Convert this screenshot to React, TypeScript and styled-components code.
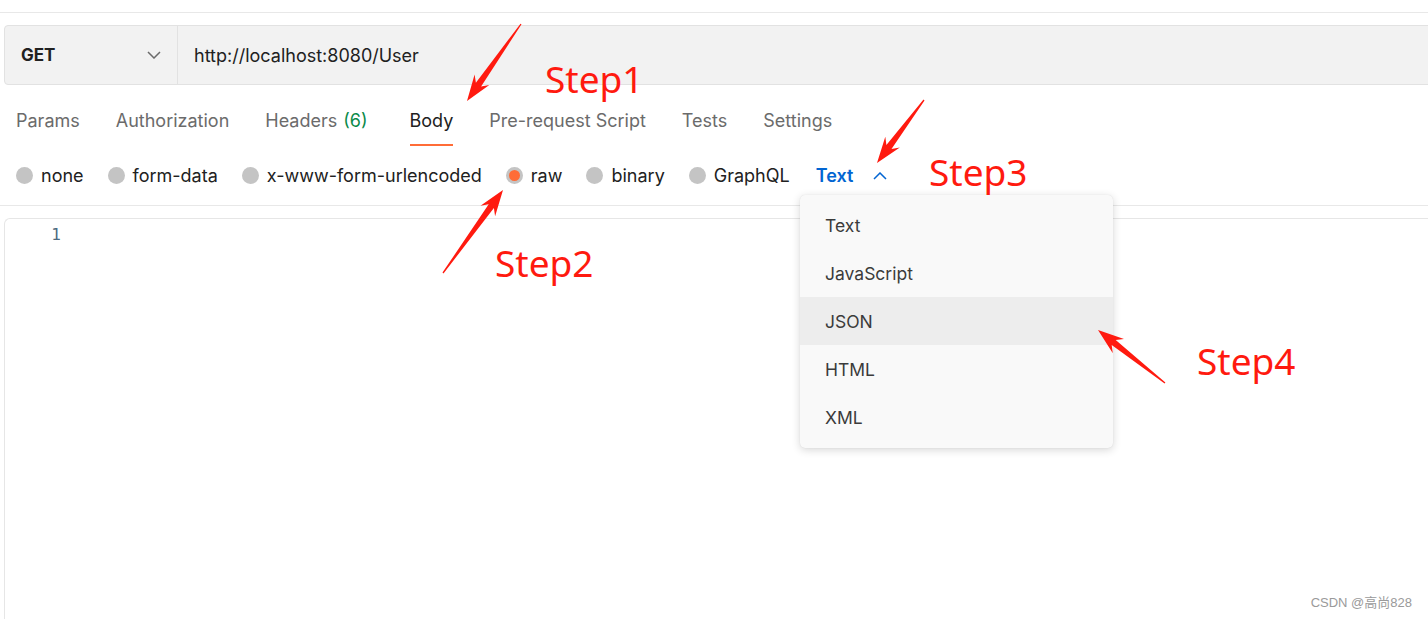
import React from "react";
import styled, { createGlobalStyle } from "styled-components";

const Global = createGlobalStyle`
  html, body { margin: 0; padding: 0; background: #ffffff; overflow: hidden; }
  body { font-family: Inter, "Noto Sans", sans-serif; width: 1428px; height: 619px; }
`;

const Page = styled.div`
  position: relative;
  width: 1428px;
  height: 619px;
  overflow: hidden;
  background: #fff;
`;

const TopRule = styled.div`
  height: 12px;
  border-bottom: 1px solid #e8e8e8;
`;

const RequestBar = styled.div`
  display: flex;
  align-items: stretch;
  margin: 12px 0 0 4px;
  width: 1460px;
  height: 60px;
  background: #f2f2f2;
  border: 1px solid #e2e2e2;
  border-radius: 4px;
  box-sizing: border-box;
`;

const Method = styled.div`
  display: flex;
  align-items: center;
  justify-content: space-between;
  width: 173px;
  box-sizing: border-box;
  padding: 0 16px 0 16px;
  border-right: 1px solid #e2e2e2;
  font-weight: 700;
  font-size: 17px;
  color: #212121;
`;

const Url = styled.div`
  display: flex;
  align-items: center;
  padding-left: 16px;
  font-size: 18px;
  color: #212121;
`;

const Tabs = styled.div`
  display: flex;
  gap: 36px;
  padding: 0 0 0 16px;
  height: 61px;
  align-items: stretch;
`;

const Tab = styled.div<{ $active?: boolean }>`
  display: flex;
  align-items: center;
  padding-top: 12px;
  box-sizing: border-box;
  font-size: 18px;
  color: ${(p) => (p.$active ? "#212121" : "#6b6b6b")};
  border-bottom: 2px solid ${(p) => (p.$active ? "#ff6c37" : "transparent")};
  height: 61px;
`;

const Count = styled.span`
  color: #0b8a4a;
  margin-left: 6px;
  margin-right: 6px;
`;

const BodyTypes = styled.div`
  display: flex;
  align-items: center;
  height: 59px;
  padding-left: 16px;
  border-bottom: 1px solid #e8e8e8;
  gap: 24px;
`;

const Option = styled.div`
  display: flex;
  align-items: center;
  gap: 8px;
  font-size: 18px;
  color: #212121;
`;

const Radio = styled.span<{ $checked?: boolean }>`
  width: 17px;
  height: 17px;
  border-radius: 50%;
  box-sizing: border-box;
  background: ${(p) => (p.$checked ? "#ff6c37" : "#c4c4c4")};
  border: ${(p) => (p.$checked ? "3px solid #c4c4c4" : "none")};
`;

const LangSelect = styled.div`
  display: flex;
  align-items: center;
  gap: 20px;
  margin-left: 2px;
  color: #0265d2;
  font-weight: 600;
  font-size: 18px;
`;

const Editor = styled.div`
  margin: 12px 0 0 4px;
  width: 1460px;
  height: 420px;
  border-top: 1px solid #e6e6e6;
  border-left: 1px solid #e6e6e6;
  border-top-left-radius: 6px;
`;

const LineNo = styled.div`
  width: 56px;
  text-align: right;
  padding-top: 6px;
  font-family: "DejaVu Sans Mono", monospace;
  font-size: 16px;
  color: #4d6a80;
`;

const Menu = styled.div`
  position: absolute;
  left: 800px;
  top: 195px;
  width: 313px;
  padding: 6px 0 7px;
  background: #f9f9f9;
  border-radius: 5px;
  box-shadow: 0 2px 8px rgba(0, 0, 0, 0.16), 0 0 1px rgba(0, 0, 0, 0.12);
`;

const MenuItem = styled.div<{ $hover?: boolean }>`
  height: 48px;
  display: flex;
  align-items: center;
  padding-left: 25px;
  font-size: 17.5px;
  color: #3b3b3b;
  background: ${(p) => (p.$hover ? "#ededed" : "transparent")};
`;

const StepLabel = styled.div<{ $x: number; $y: number }>`
  position: absolute;
  left: ${(p) => p.$x}px;
  top: ${(p) => p.$y}px;
  font-family: "Noto Sans", "Open Sans", sans-serif;
  font-size: 37px;
  line-height: 1;
  color: #ff1a0f;
`;

const Overlay = styled.svg`
  position: absolute;
  left: 0;
  top: 0;
  pointer-events: none;
`;

const Watermark = styled.div`
  position: absolute;
  right: 16px;
  bottom: 8px;
  font-family: "Liberation Sans", "Noto Sans CJK SC", sans-serif;
  font-size: 13px;
  color: #9a9a9a;
`;

function arrowPoints(tx: number, ty: number, px: number, py: number): string {
  const dx = px - tx;
  const dy = py - ty;
  const len = Math.hypot(dx, dy);
  const ux = dx / len;
  const uy = dy / len;
  const nx = -uy;
  const ny = ux;
  const headLen = 26;
  const hx = px - ux * headLen;
  const hy = py - uy * headLen;
  const jx = px - ux * (headLen - 6);
  const jy = py - uy * (headLen - 6);
  const pts: [number, number][] = [
    [tx + nx * 0.6, ty + ny * 0.6],
    [jx + nx * 3.2, jy + ny * 3.2],
    [hx + nx * 9, hy + ny * 9],
    [px, py],
    [hx - nx * 9, hy - ny * 9],
    [jx - nx * 3.2, jy - ny * 3.2],
    [tx - nx * 0.6, ty - ny * 0.6],
  ];
  return pts.map((p) => `${p[0].toFixed(1)},${p[1].toFixed(1)}`).join(" ");
}

const Chevron = ({ up, color }: { up?: boolean; color: string }) => (
  <svg width="14" height="8" viewBox="0 0 14 8">
    <path
      d={up ? "M1 7 L7 1 L13 7" : "M1 1 L7 7 L13 1"}
      fill="none"
      stroke={color}
      strokeWidth="1.5"
    />
  </svg>
);

const tabs = ["Params", "Authorization", "Headers", "Body", "Pre-request Script", "Tests", "Settings"];
const options = ["none", "form-data", "x-www-form-urlencoded", "raw", "binary", "GraphQL"];
const langs = ["Text", "JavaScript", "JSON", "HTML", "XML"];

export default function App() {
  return (
    <Page>
      <Global />
      <TopRule />
      <RequestBar>
        <Method>
          GET
          <Chevron color="#6b6b6b" />
        </Method>
        <Url>http://localhost:8080/User</Url>
      </RequestBar>
      <Tabs>
        {tabs.map((t) => (
          <Tab key={t} $active={t === "Body"}>
            {t}
            {t === "Headers" && <Count>(6)</Count>}
          </Tab>
        ))}
      </Tabs>
      <BodyTypes>
        {options.map((o) => (
          <Option key={o}>
            <Radio $checked={o === "raw"} />
            {o}
          </Option>
        ))}
        <LangSelect>
          Text
          <Chevron up color="#0265d2" />
        </LangSelect>
      </BodyTypes>
      <Editor>
        <LineNo>1</LineNo>
      </Editor>

      <Menu>
        {langs.map((l) => (
          <MenuItem key={l} $hover={l === "JSON"}>
            {l}
          </MenuItem>
        ))}
      </Menu>

      <Overlay width="1428" height="619">
        <polygon points={arrowPoints(521, 24, 467, 101)} fill="#ff1a0f" />
        <polygon points={arrowPoints(443, 273, 503, 190)} fill="#ff1a0f" />
        <polygon points={arrowPoints(924, 100, 877, 163)} fill="#ff1a0f" />
        <polygon points={arrowPoints(1165, 383, 1098, 330)} fill="#ff1a0f" />
      </Overlay>
      <StepLabel $x={545} $y={60}>Step1</StepLabel>
      <StepLabel $x={495} $y={244}>Step2</StepLabel>
      <StepLabel $x={929} $y={153}>Step3</StepLabel>
      <StepLabel $x={1197} $y={342}>Step4</StepLabel>

      <Watermark>CSDN @高尚828</Watermark>
    </Page>
  );
}
